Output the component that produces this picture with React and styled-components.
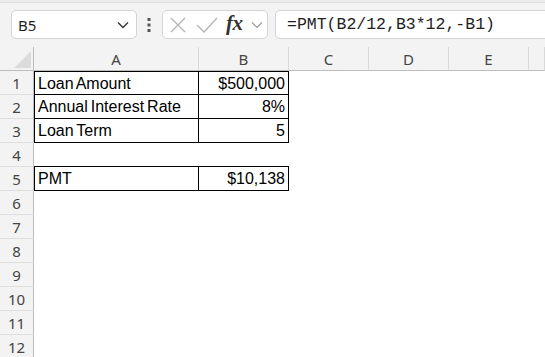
import React from "react";
import styled, { createGlobalStyle } from "styled-components";

const GlobalStyle = createGlobalStyle`
  html, body {
    margin: 0;
    padding: 0;
    background: #ffffff;
  }
  body {
    overflow: hidden;
  }
`;

const columns = ["A", "B", "C", "D", "E", ""];
const rowCount = 12;

// cell contents + which edges carry a thin black border (t/r/b/l)
const cells = {
  1: [
    { text: "Loan Amount", b: "tlrb" },
    { text: "$500,000", right: true, b: "trb" },
  ],
  2: [
    { text: "Annual Interest Rate", b: "lrb" },
    { text: "8%", right: true, b: "rb" },
  ],
  3: [
    { text: "Loan Term", b: "lrb" },
    { text: "5", right: true, b: "rb" },
  ],
  4: [{ text: "", b: "b" }, { text: "", b: "b" }],
  5: [
    { text: "PMT", b: "lrb" },
    { text: "$10,138", right: true, b: "rb" },
  ],
};

const edge = (side) => (p) =>
  p.$b && p.$b.includes(side) ? "1px solid #000000" : "none";

const App = () => {
  const rows = Array.from({ length: rowCount }, (_, i) => i + 1);

  return (
    <Shell>
      <GlobalStyle />
      <TopStrip />
      <Toolbar>
        <NameBox>
          <span>B5</span>
          <svg width="12" height="8" viewBox="0 0 12 8">
            <polyline
              points="1,1.5 6,6.5 11,1.5"
              fill="none"
              stroke="#333"
              strokeWidth="1.3"
            />
          </svg>
        </NameBox>
        <Grip>
          <svg width="4" height="14" viewBox="0 0 4 14">
            <rect x="0.5" y="0" width="3" height="3" fill="#555" />
            <rect x="0.5" y="5.5" width="3" height="3" fill="#555" />
            <rect x="0.5" y="11" width="3" height="3" fill="#555" />
          </svg>
        </Grip>
        <ActionGroup>
          <svg width="18" height="18" viewBox="0 0 18 18">
            <path
              d="M2 2 L16 16 M16 2 L2 16"
              stroke="#b4b4b4"
              strokeWidth="1.3"
              fill="none"
            />
          </svg>
          <svg width="22" height="16" viewBox="0 0 22 16">
            <polyline
              points="1,8 8,15 21,1"
              stroke="#b4b4b4"
              strokeWidth="1.3"
              fill="none"
            />
          </svg>
          <Fx>fx</Fx>
          <svg width="12" height="8" viewBox="0 0 12 8">
            <polyline
              points="1,1.5 6,6.5 11,1.5"
              fill="none"
              stroke="#9a9a9a"
              strokeWidth="1.2"
            />
          </svg>
        </ActionGroup>
        <FormulaInput>=PMT(B2/12,B3*12,-B1)</FormulaInput>
      </Toolbar>

      <Sheet>
        <Corner />
        {columns.map((c, i) => (
          <ColHeader key={"h" + i}>{c}</ColHeader>
        ))}
        {rows.map((r) => (
          <React.Fragment key={r}>
            <RowHeader>{r}</RowHeader>
            {columns.map((_, ci) => {
              const cell = (cells[r] || [])[ci];
              return (
                <Cell key={ci} $b={cell && cell.b} $right={cell && cell.right}>
                  {cell ? cell.text : ""}
                </Cell>
              );
            })}
          </React.Fragment>
        ))}
      </Sheet>
    </Shell>
  );
};

const Shell = styled.div`
  width: 545px;
  height: 357px;
  overflow: hidden;
  background: #f3f3f3;
  display: flex;
  flex-direction: column;
`;

const TopStrip = styled.div`
  height: 2px;
  background: #ececec;
  border-bottom: 1px solid #e0e0e0;
  flex-shrink: 0;
`;

const Toolbar = styled.div`
  height: 44px;
  box-sizing: border-box;
  padding: 7px 0 8px 11px;
  display: flex;
  align-items: stretch;
  flex-shrink: 0;
`;

const Box = styled.div`
  box-sizing: border-box;
  height: 29px;
  background: #ffffff;
  border: 1px solid #d4d4d4;
  border-radius: 5px;
  display: flex;
  align-items: center;
`;

const NameBox = styled(Box)`
  width: 126px;
  padding: 0 7px 0 6px;
  justify-content: space-between;
  font-family: "Noto Sans", "Open Sans", sans-serif;
  font-size: 15px;
  color: #1e1e1e;
`;

const Grip = styled.div`
  width: 4px;
  margin: 0 11px 0 10px;
  display: flex;
  align-items: center;
`;

const ActionGroup = styled(Box)`
  width: 106px;
  padding: 0 4px 0 6px;
  gap: 0;
  justify-content: space-between;
`;

const Fx = styled.span`
  font-family: "Liberation Serif", "DejaVu Serif", serif;
  font-style: italic;
  font-weight: bold;
  font-size: 21px;
  color: #333333;
  letter-spacing: -0.5px;
  margin-top: -3px;
`;

const FormulaInput = styled(Box)`
  flex: 1;
  margin: 0 -12px 0 7px;
  padding-left: 11px;
  font-family: "Liberation Mono", "DejaVu Sans Mono", monospace;
  font-size: 16.5px;
  color: #1e1e1e;
  white-space: nowrap;
`;

const Sheet = styled.div`
  flex: 1;
  display: grid;
  grid-template-columns: 34px 165px 90px 80px 80px 80px 1fr;
  grid-auto-rows: 24px;
  background: #ffffff;
`;

const HeadBase = styled.div`
  box-sizing: border-box;
  background: #f3f3f3;
  display: flex;
  align-items: center;
  justify-content: center;
  font-family: "Noto Sans", "Open Sans", sans-serif;
  font-size: 15px;
  color: #444444;
`;

const Corner = styled(HeadBase)`
  position: relative;
  border-right: 1px solid #bdbdbd;
  border-bottom: 1px solid #bdbdbd;

  &::after {
    content: "";
    position: absolute;
    right: 2px;
    bottom: 2px;
    width: 17px;
    height: 17px;
    background: #dcdcdc;
    clip-path: polygon(100% 0, 100% 100%, 0 100%);
  }
`;

const ColHeader = styled(HeadBase)`
  border-bottom: 1px solid #bdbdbd;
  border-right: 1px solid #d9d9d9;
  padding-top: 1px;
`;

const RowHeader = styled(HeadBase)`
  border-right: 1px solid #bdbdbd;
  border-bottom: 1px solid #dedede;
  padding-top: 1px;
`;

const Cell = styled.div`
  box-sizing: border-box;
  display: flex;
  align-items: center;
  justify-content: ${(p) => (p.$right ? "flex-end" : "flex-start")};
  padding: 1px 3px 0 3px;
  font-family: "Liberation Sans", Arial, sans-serif;
  font-size: 16px;
  word-spacing: -1.5px;
  color: #000000;
  white-space: nowrap;
  border-top: ${edge("t")};
  border-right: ${edge("r")};
  border-bottom: ${edge("b")};
  border-left: ${edge("l")};
`;

export default App;
